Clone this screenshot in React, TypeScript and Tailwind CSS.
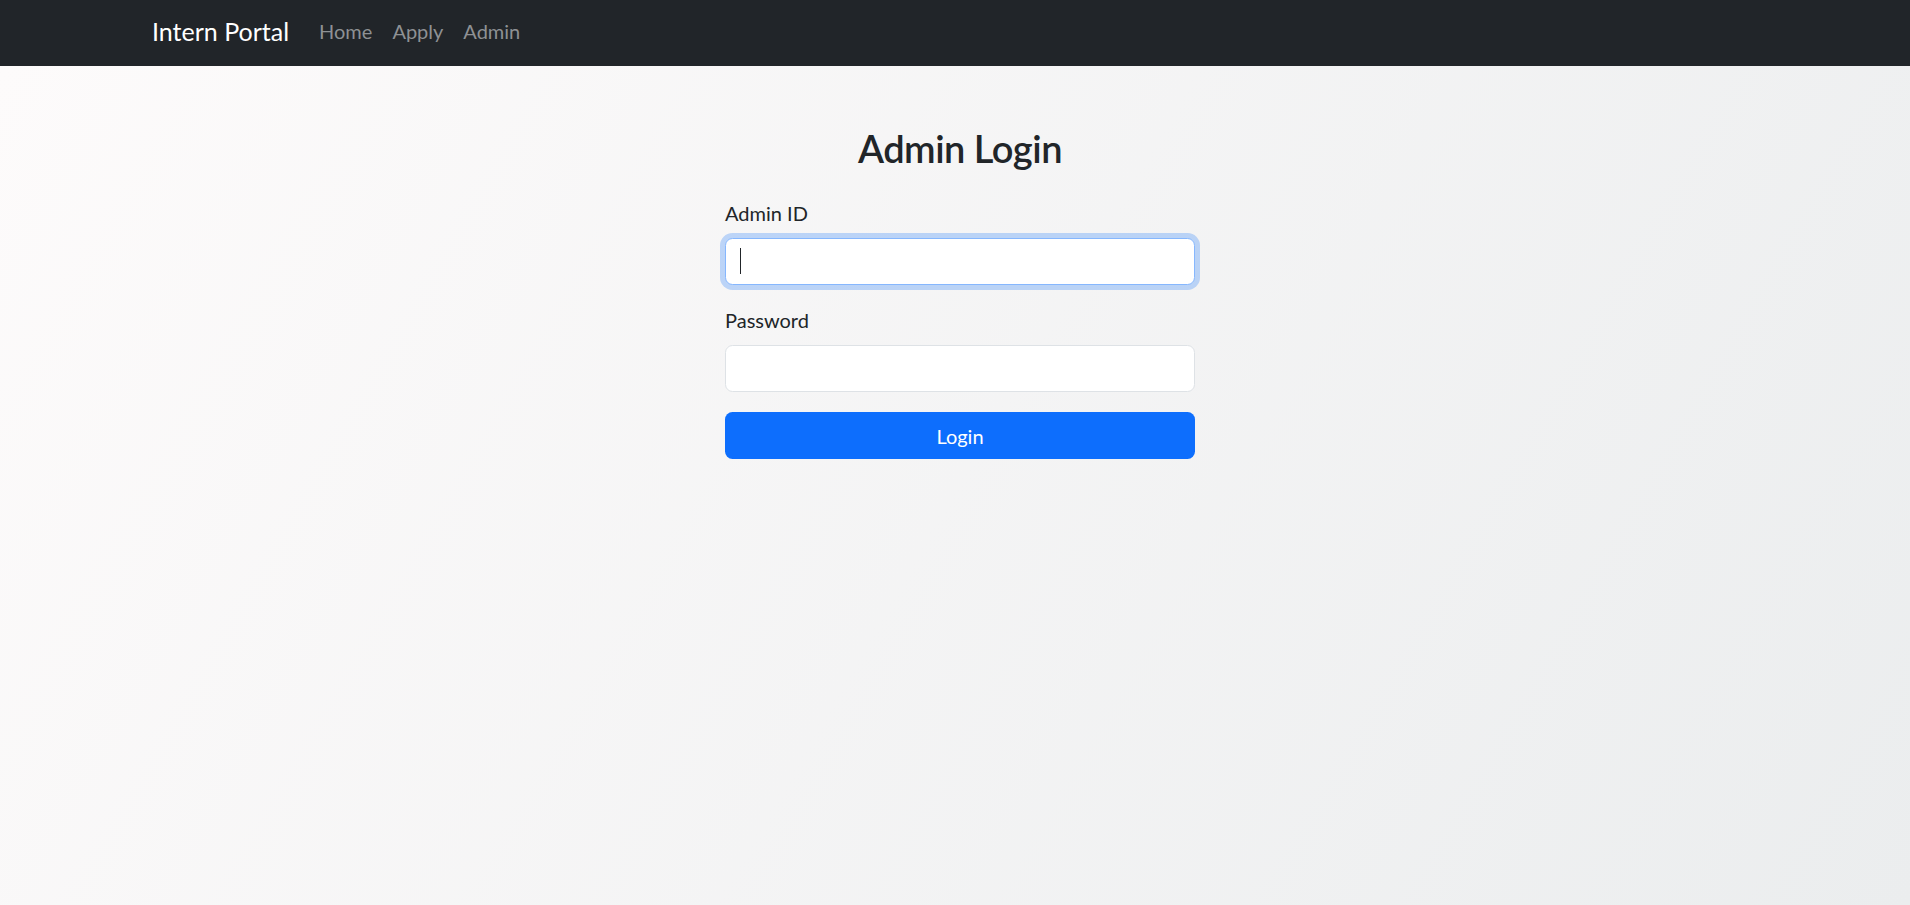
const NavBar = () => {
  return (
    <nav className="h-[66px] bg-[#212529] flex items-center pb-[3px] pl-[152px]">
      <a href="#" className="text-[25px] leading-[37.5px] text-white mr-[20px]">
        Intern Portal
      </a>
      <ul className="flex -mt-[2px]">
        <li>
          <a href="#" className="block px-[10px] text-[20px] leading-[30px] text-[#8e9194]">
            Home
          </a>
        </li>
        <li>
          <a href="#" className="block px-[10px] text-[20px] leading-[30px] text-[#8e9194]">
            Apply
          </a>
        </li>
        <li>
          <a href="#" className="block px-[10px] text-[20px] leading-[30px] text-[#8e9194]">
            Admin
          </a>
        </li>
      </ul>
    </nav>
  );
};

const AdminLogin = () => {
  return (
    <div className="w-[480px] mx-auto pl-[10px] pt-[58px]">
      <h2 className="text-[38px] leading-[48px] font-semibold tracking-[-0.5px] text-center text-[#212529]">
        Admin Login
      </h2>
      <form className="mt-[26px]" onSubmit={(e) => e.preventDefault()}>
        <div className="mb-[20px]">
          <label className="block text-[20px] leading-[30px] mb-[10px] text-[#212529]">
            Admin ID
          </label>
          <div className="relative">
            <input
              type="text"
              className="block w-full h-[47px] px-[15px] text-[20px] bg-white border border-[#86b7fe] rounded-[7.5px] outline-none shadow-[0_0_0_5px_rgba(13,110,253,0.25)] text-[#212529]"
            />
            {/* caret as seen in the focused field */}
            <span className="absolute left-[15px] top-[10px] w-px h-[26px] bg-[#212529]" />
          </div>
        </div>
        <div className="mb-[20px]">
          <label className="block text-[20px] leading-[30px] mb-[10px] text-[#212529]">
            Password
          </label>
          <input
            type="password"
            className="block w-full h-[47px] px-[15px] text-[20px] bg-white border border-[#dee2e6] rounded-[7.5px] outline-none text-[#212529]"
          />
        </div>
        <button
          type="submit"
          className="w-full h-[47px] bg-[#0d6efd] text-white text-[20px] rounded-[7.5px]"
        >
          Login
        </button>
      </form>
    </div>
  );
};

export default function App() {
  return (
    <div className="min-h-screen flex flex-col font-['Lato',sans-serif]">
      <NavBar />
      <main className="flex-1 bg-[linear-gradient(120deg,#fdfbfb_0%,#ebedee_100%)]">
        <AdminLogin />
      </main>
    </div>
  );
}
